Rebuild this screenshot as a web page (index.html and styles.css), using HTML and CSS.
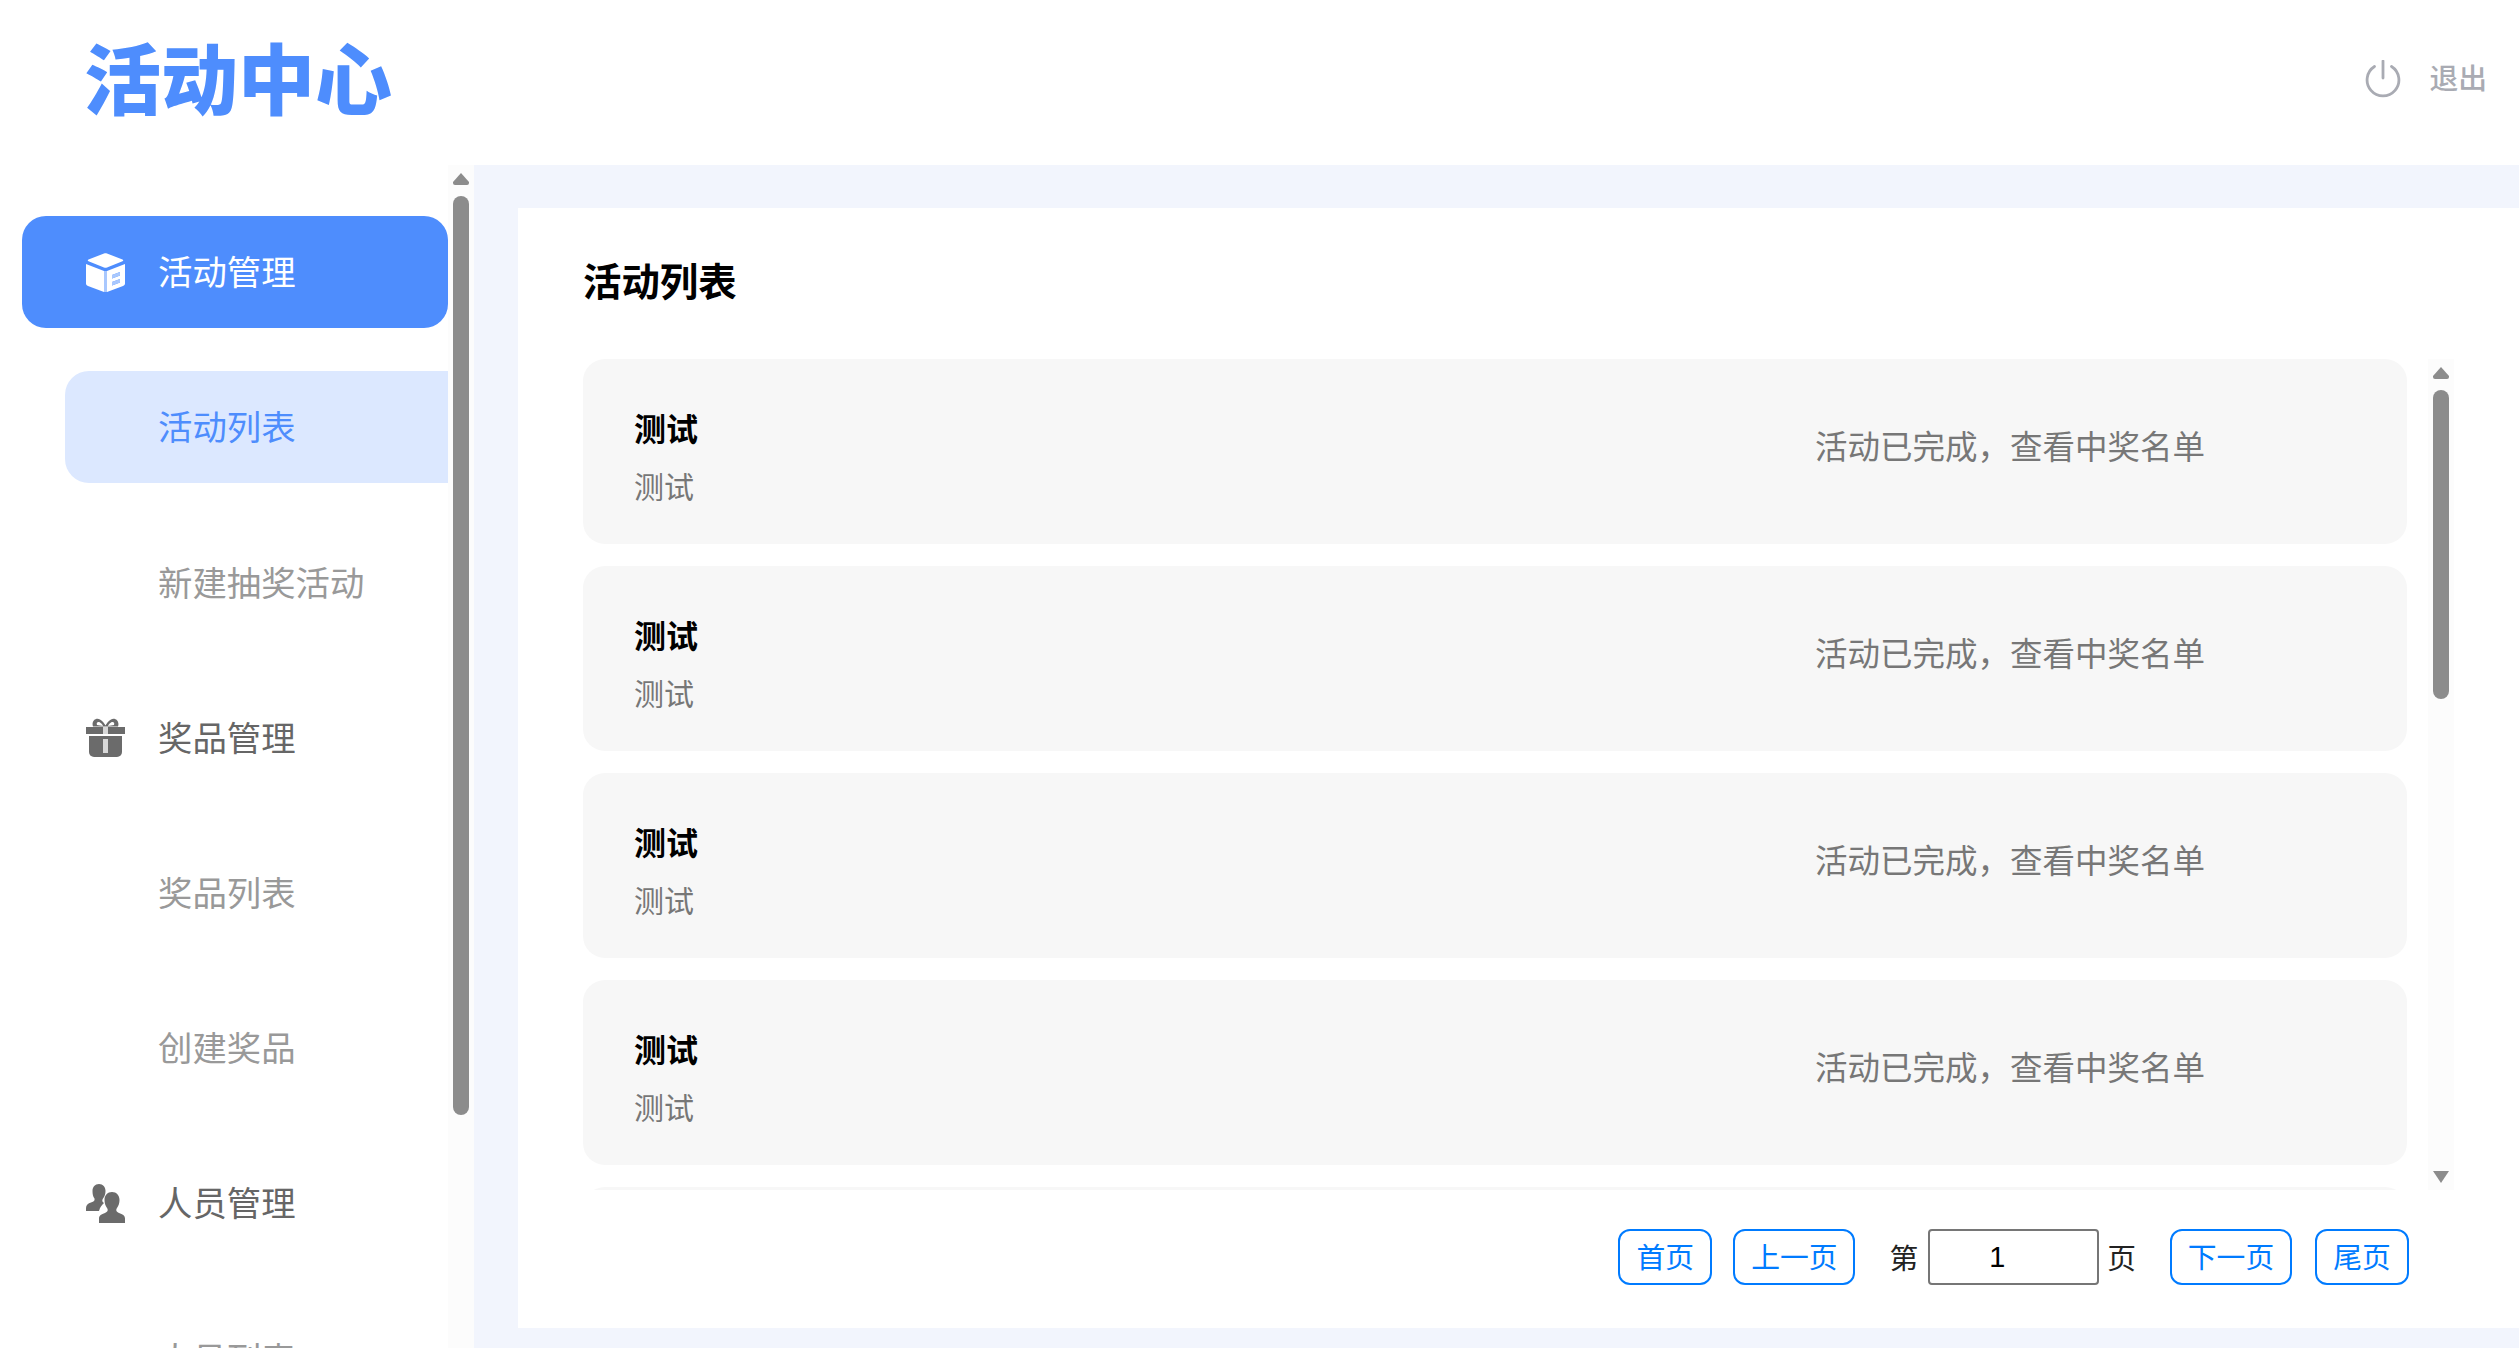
FILE: index.html
```html
<!DOCTYPE html>
<html lang="zh-CN">
<head>
<meta charset="utf-8">
<title>活动中心</title>
<link rel="stylesheet" href="styles.css">
</head>
<body>
<header class="topbar">
  <div class="logo">活动中心</div>
  <div class="logout">
    <svg class="power" viewBox="0 0 36 38" aria-hidden="true"><path d="M9.500 6.500a15.900 15.900 0 1 0 17 0" fill="none" stroke="currentColor" stroke-width="2.800" stroke-linecap="round"/><path d="M18 1v17" fill="none" stroke="currentColor" stroke-width="2.800" stroke-linecap="round"/></svg>
    <span>退出</span>
  </div>
</header>
<div class="body">
  <aside class="sidebar">
    <nav class="nav">
      <a class="item group active">
        <svg class="ico" viewBox="0 0 39 39" aria-hidden="true"><path d="M18 .5c1-.4 2-.4 3 0L36.500 6.500c1 .4 1 1.300 0 1.700L21 14.500c-1 .4-2 .4-3 0L2.500 8.200c-1-.4-1-1.300 0-1.700z" fill="#fff"/><path d="M0 11 18 18V39L2 33c-1.300-.5-2-1.300-2-2.500z" fill="#fff"/><path fill-rule="evenodd" d="M21 18 39 11V30.500c0 1.200-.7 2-2 2.500L21 39zM26 22v3.500l8-3v-3.500zM26 29v3.500l8-3v-3.500z" fill="#fff"/><path d="M26 22v3.500l8-3v-3.500zM26 29v3.500l8-3v-3.500zM18 18h3v21h-3z" fill="#a9c8fe"/></svg>
        <span>活动管理</span>
      </a>
      <a class="item sub current"><span>活动列表</span></a>
      <a class="item sub"><span>新建抽奖活动</span></a>
      <a class="item group">
        <svg class="ico gift" viewBox="0 0 39 39" aria-hidden="true"><path d="M7 8.500C5 3 10 -1 14 1.500c2.500 1.500 4.500 4 5.500 6 1-2 3-4.500 5.500-6 4-2.500 9 1.500 7 7z" fill="#6b6b6b"/><path d="M11 7c-1-2.500 1-3.500 3-2.500 1.500.8 2.500 2 3 3.500zM28 7c1-2.500-1-3.500-3-2.500-1.500.8-2.500 2-3 3.500z" fill="#fff"/><path d="M0 9h39v7H0z" fill="#6b6b6b"/><path d="M3 18h33v16a5 5 0 0 1-5 5H8a5 5 0 0 1-5-5z" fill="#6b6b6b"/><path d="M17 9h5v7h-5zM17 21h5v14h-5z" fill="#d8d8d8"/></svg>
        <span>奖品管理</span>
      </a>
      <a class="item sub"><span>奖品列表</span></a>
      <a class="item sub"><span>创建奖品</span></a>
      <a class="item group">
        <svg class="ico" viewBox="0 0 39 39" aria-hidden="true"><path d="M13 0c4 0 6.500 3 6.500 7 0 3-1 5.500-2.500 7.500-1.500 2-.5 3.500 1 4.500-2 2-4 4-5 8H0v-3c0-3 2-4.500 5-5.500 3-1 4-2 3.500-4C7 12.500 6.500 10 6.500 7 6.500 3 9 0 13 0z" fill="#6b6b6b"/><path d="M26 8c4.500 0 7.500 3.500 7.500 8 0 3-1 6-2.500 8-1.500 2-.5 4 2 5 3.500 1.300 6 2.500 6 5.500V39H13v-4.500c0-3 2.500-4.200 6-5.500 2.500-1 3.500-3 2-5-1.500-2-2.500-5-2.500-8 0-4.500 3-8 7.500-8z" fill="#6b6b6b"/></svg>
        <span>人员管理</span>
      </a>
      <a class="item sub"><span>人员列表</span></a>
    </nav>
    <div class="scroll scroll-side">
      <i class="arrow up"></i>
      <i class="thumb thumb-side"></i>
    </div>
  </aside>
  <main class="main">
    <section class="card">
      <h1 class="title">活动列表</h1>
      <div class="listwrap">
        <div class="list">
          <article class="row"><div class="info"><div class="name">测试</div><div class="desc">测试</div></div><div class="status">活动已完成，查看中奖名单</div></article>
          <article class="row"><div class="info"><div class="name">测试</div><div class="desc">测试</div></div><div class="status">活动已完成，查看中奖名单</div></article>
          <article class="row"><div class="info"><div class="name">测试</div><div class="desc">测试</div></div><div class="status">活动已完成，查看中奖名单</div></article>
          <article class="row"><div class="info"><div class="name">测试</div><div class="desc">测试</div></div><div class="status">活动已完成，查看中奖名单</div></article>
          <article class="row"><div class="info"><div class="name">测试</div><div class="desc">测试</div></div><div class="status">活动已完成，查看中奖名单</div></article>
        </div>
        <div class="scroll scroll-list">
          <i class="arrow up"></i>
          <i class="thumb thumb-list"></i>
          <i class="arrow down"></i>
        </div>
      </div>
      <div class="pager">
        <button class="btn w94">首页</button>
        <button class="btn w122">上一页</button>
        <span class="pg-label first">第</span>
        <input class="pg-input" value="1">
        <span class="pg-label last">页</span>
        <button class="btn w122">下一页</button>
        <button class="btn w94">尾页</button>
      </div>
    </section>
  </main>
</div>
</body>
</html>
```

FILE: styles.css
```css
* { box-sizing: border-box; }
html, body { margin: 0; height: 100%; }
body {
  width: 2519px;
  height: 1348px;
  overflow: hidden;
  background: #fff;
  font-family: "Noto Sans CJK SC", "Liberation Sans", sans-serif;
  display: flex;
  flex-direction: column;
}

/* top bar */
.topbar {
  height: 165px;
  flex: none;
  display: flex;
  align-items: center;
  justify-content: space-between;
  padding: 0 32px 8px 84px;
}
.logo {
  font-size: 77px;
  line-height: 90px;
  font-weight: 900;
  color: #4e8dfd;
  margin-top: -5px;
}
.logout {
  display: flex;
  align-items: center;
  gap: 28px;
  color: #a9abb3;
  font-size: 28.8px;
  line-height: 40px;
  font-weight: 500;
}
.power { width: 36px; height: 38px; display: block; }
.logout span { margin-bottom: 4px; }

/* frame */
.body { flex: 1; min-height: 0; display: flex; }

/* sidebar */
.sidebar { width: 474px; flex: none; display: flex; background: #fff; overflow: hidden; }
.nav { width: 448px; flex: none; padding: 51px 0 0 22px; overflow: hidden; display: flex; flex-direction: column; gap: 43.2px; }
.item {
  height: 112px;
  flex: none;
  display: flex;
  align-items: center;
  font-size: 34.4px;
  line-height: 1;
}
.item span { margin-bottom: 3px; }
.group { padding-left: 64px; color: #666; gap: 33px; }
.group .ico { width: 39px; height: 39px; flex: none; }
.group.active { background: #4e8dfd; color: #fff; border-radius: 24px; }
.sub { color: #999; padding-left: 136px; }
.sub.current {
  margin-left: 43px;
  padding-left: 93px;
  background: #dce8ff;
  color: #4e8dfd;
  border-radius: 24px 0 0 24px;
}

/* scroll bars */
.scroll { flex: none; width: 26px; background: #fcfcfc; display: flex; flex-direction: column; align-items: center; }
.scroll-side { padding-top: 8px; }
.scroll-list { padding-top: 8px; height: 100%; }
.arrow { display: block; flex: none; width: 16px; height: 12px; background: #8c8c8c; }
.arrow.up { clip-path: polygon(50% 0, 100% 75%, 100% 100%, 0 100%, 0 75%); border-radius: 2px; }
.arrow.down { clip-path: polygon(0 0, 100% 0, 50% 100%); margin-top: auto; margin-bottom: 7px; }
.thumb { display: block; flex: none; width: 16px; background: #8c8c8c; border-radius: 8px; margin-top: 11px; }
.thumb-side { height: 919px; }
.thumb-list { height: 309px; }

/* main */
.main { flex: 1; min-width: 0; background: #f2f5fd; padding: 43px 0 20px 44px; }
.card { height: 100%; background: #fff; padding: 42px 65px 0 65px; }
.title { margin: 0 0 51px; font-size: 38.4px; line-height: 58px; font-weight: 700; color: #000; }
.listwrap { height: 831px; display: flex; gap: 21px; }
.list { width: 1824px; flex: none; overflow: hidden; display: flex; flex-direction: column; gap: 22px; }
.row {
  height: 185px;
  flex: none;
  background: #f7f7f7;
  border-radius: 22px;
  display: flex;
  justify-content: space-between;
  align-items: center;
  padding: 0 202px 0 51px;
}
.info { align-self: flex-start; padding-top: 44px; }
.name { font-size: 32px; line-height: 48px; font-weight: 700; color: #000; }
.desc { font-size: 30px; line-height: 42px; margin-top: 13px; color: #777; }
.status { font-size: 32.5px; line-height: 48px; color: #777; margin-bottom: 14px; }

/* pager */
.pager { margin-top: 39px; padding-right: 45px; display: flex; justify-content: flex-end; align-items: center; }
.btn {
  height: 56px;
  padding: 0 0 2px;
  background: #fff;
  border: 2px solid #007bff;
  border-radius: 12px;
  color: #007bff;
  font-family: inherit;
  font-size: 28.8px;
  line-height: 1;
}
.w94 { width: 94px; }
.w122 { width: 122px; margin-left: 21px; }
.w122 + .w94 { margin-left: 23px; }
.pg-label { font-size: 28.8px; color: #222; line-height: 1; }
.pg-label.first { margin-left: 34px; margin-right: 10px; }
.pg-label.last { margin-left: 8px; margin-right: 11px; }
.pg-label.last + .w122 { margin-left: 23px; }
.pg-input {
  width: 171px;
  height: 56px;
  padding: 0 0 0 59px;
  border: 2px solid #767676;
  border-radius: 4px;
  font-family: "Liberation Sans", sans-serif;
  font-size: 28.8px;
  color: #000;
  background: #fff;
}
```
